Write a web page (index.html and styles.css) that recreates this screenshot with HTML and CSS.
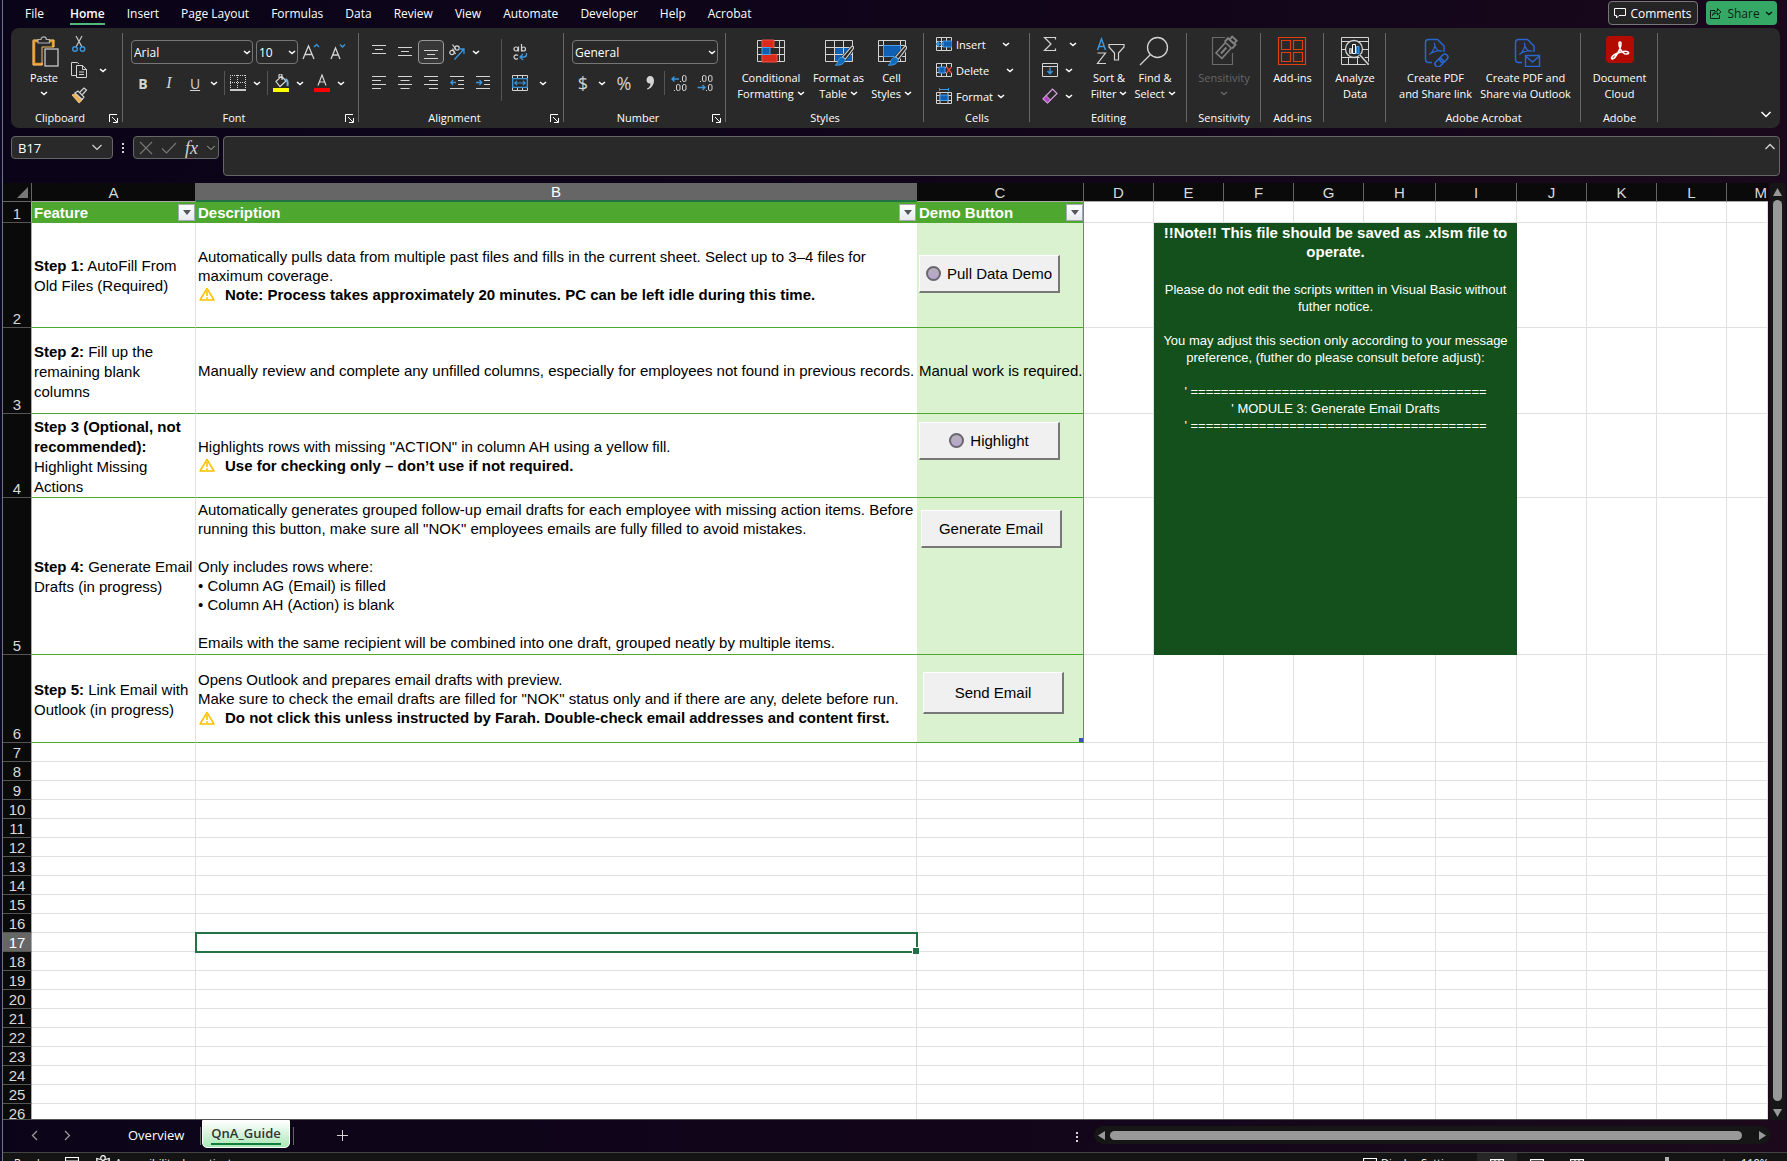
FILE: index.html
```html
<!DOCTYPE html>
<html lang="en">
<head>
<meta charset="utf-8">
<title>QnA_Guide</title>
<link rel="stylesheet" href="styles.css">
</head>
<body>
<svg width="0" height="0" class="defs" aria-hidden="true">
  <symbol id="chev" viewBox="0 0 8 5"><path d="M1 1l3 2.6L7 1" fill="none" stroke="currentColor" stroke-width="1.5"/></symbol>
  <symbol id="launch" viewBox="0 0 9 9"><path d="M.5 8V.5H8M3 3l5 5M8.500 4v4.500H4" fill="none" stroke="currentColor"/></symbol>
  <symbol id="warn" viewBox="0 0 16 14"><path d="M8 1.500L15 13H1z" fill="none" stroke="#ffc000" stroke-width="1.500" stroke-linejoin="round"/><path d="M8 4v5M8 10.300v1.700" stroke="#ffc000" stroke-width="1.600"/></symbol>
  <symbol id="brush" viewBox="0 0 24 24"><path d="M22 2L11 14M22 2l1 1L13 16" fill="none" stroke="#292929" stroke-width="4"/><path d="M22.500 1.500c1 1 .5 2-.5 3.500l-8 10.500-3-2.500 9-10.500c1-1 2-1.500 2.500-1z" fill="#292929" stroke="#d4d4d4" stroke-width="1.200"/><path d="M10.500 13.500c3 .5 4 3 2.500 5-1.500 2.500-5 4-10 3.500 2-1 2.500-3 3-5 .5-2 2-3.500 4.500-3.500z" fill="#0f6cbd" stroke="#4ba0e8"/></symbol>
  <symbol id="pdf" viewBox="0 0 32 32"><path d="M12 27.500H8.500a3 3 0 0 1-3-3v-17a3 3 0 0 1 3-3h9l6.500 6.500v6" fill="none" stroke="#2a66d0" stroke-width="1.500"/><path d="M9.500 19.500c1-2 9-4.500 12-3.500-3 1-7-3-7-7.500 1.500 2-1.500 8.500-5 11z" fill="none" stroke="#2a66d0" stroke-width="1.200"/></symbol>
</svg>

<div class="app">
  <header class="tabs">
    <nav class="menu">
      <a href="#file" class="first">File</a><a href="#home" class="on">Home</a><a href="#insert">Insert</a><a href="#layout">Page Layout</a><a href="#formulas">Formulas</a><a href="#data">Data</a><a href="#review">Review</a><a href="#view">View</a><a href="#automate">Automate</a><a href="#developer">Developer</a><a href="#help">Help</a><a href="#acrobat">Acrobat</a>
    </nav>
    <button class="comments"><svg width="12" height="12" viewBox="0 0 12 12"><path d="M.5 1.500h11v7H5l-2.500 2.500V8.500h-2z" fill="none" stroke="#fff"/></svg>Comments</button>
    <button class="share"><svg width="12" height="12" viewBox="0 0 12 12"><path d="M5 3.500H.5v8h9V8M2.500 8.500c.5-3 2.500-4.500 5-4.500V1.500L11 5 7.500 8V6C5.500 6 4 6.500 2.500 8.500z" fill="none" stroke="#0c1f14"/></svg>Share<svg width="8" height="5"><use href="#chev"/></svg></button>
  </header>

  <section class="ribbon">
    <div class="group g-clip">
      <div class="body">
        <button class="tall paste">
          <svg width="32" height="32" viewBox="0 0 32 32"><path d="M6 6h19v6M15 29H6V6" fill="none" stroke="#e8962e" stroke-width="2.500"/><path d="M5 5h21v7H14v18H5z" fill="none" stroke="#f5c06a" stroke-width="1"/><path d="M10 8V4.500h3a2.700 2.700 0 0 1 5.400 0h3V8z" fill="#292929" stroke="#b0b0b0" stroke-width="1.200"/><rect x="17" y="14" width="13" height="17" fill="#292929" stroke="#d4d4d4" stroke-width="1.200"/></svg>
          <span>Paste</span><svg width="8" height="5" class="under"><use href="#chev"/></svg>
        </button>
        <div class="stack clipstack">
          <div class="row"><button class="t" aria-label="Cut"><svg width="16" height="18" viewBox="0 0 16 18"><path d="M5 1l6 11M11 1L5 12" stroke="#c8c8c8" stroke-width="1.200" fill="none"/><circle cx="4" cy="14" r="2.300" fill="none" stroke="#3a96dd" stroke-width="1.400"/><circle cx="11.500" cy="14" r="2.300" fill="none" stroke="#3a96dd" stroke-width="1.400"/></svg></button></div>
          <div class="row"><button class="t" aria-label="Copy"><svg width="18" height="18" viewBox="0 0 18 18"><path d="M6 14.500H1.500v-13h6L9 3" fill="none" stroke="#d4d4d4"/><path d="M6.500 4.500h6l4 4v8h-10zM12.500 4.500v4h4M9 11h5M9 13.500h5" fill="none" stroke="#d4d4d4"/></svg></button><button class="c cc" aria-label="Copy options"><svg width="8" height="5"><use href="#chev"/></svg></button></div>
          <div class="row"><button class="t" aria-label="Format Painter"><svg width="18" height="18" viewBox="0 0 18 18"><path d="M2 8l7 8c2-1 3-3 3.500-5L7 6z" fill="#f0b050" stroke="#ffd890" stroke-width=".8"/><path d="M5 6l3-2 6 6-2 2.500zM10 5l4-4 2.500 2-4 4.500" fill="#292929" stroke="#d4d4d4" stroke-width="1.200"/></svg></button></div>
        </div>
      </div>
      <div class="foot"><span>Clipboard</span><button aria-label="Clipboard settings"><svg width="9" height="9"><use href="#launch"/></svg></button></div>
    </div>

    <div class="group g-font">
      <div class="body lines">
        <div class="row r1">
          <label class="combo w122"><select aria-label="Font"><option>Arial</option></select><svg width="8" height="5"><use href="#chev"/></svg></label>
          <label class="combo w42"><select aria-label="Font size"><option>10</option></select><svg width="8" height="5"><use href="#chev"/></svg></label>
          <button class="t" aria-label="Increase font size"><svg width="18" height="18" viewBox="0 0 18 18"><path d="M1 16L6.500 3 12 16M3 11.500h7" fill="none" stroke="#d4d4d4" stroke-width="1.300"/><path d="M12 4l2.500-2.500L17 4" fill="none" stroke="#3a96dd" stroke-width="1.400"/></svg></button>
          <button class="t" aria-label="Decrease font size"><svg width="18" height="18" viewBox="0 0 18 18"><path d="M3 16L7.500 5 12 16M4.700 12h5.600" fill="none" stroke="#d4d4d4" stroke-width="1.300"/><path d="M12 1.500L14.500 4 17 1.500" fill="none" stroke="#3a96dd" stroke-width="1.400"/></svg></button>
        </div>
        <div class="row">
          <button class="t b">B</button><button class="t i">I</button><button class="t u">U</button><button class="c" aria-label="Underline options"><svg width="8" height="5"><use href="#chev"/></svg></button>
          <i class="sep"></i>
          <button class="t" aria-label="Borders"><svg width="16" height="16" viewBox="0 0 16 16"><path d="M.5 0v14M15.500 0v14M0 .5h16M0 7.500h16M7.500 0v14" stroke="#d4d4d4" stroke-dasharray="1 1"/><path d="M0 15h16" stroke="#fff" stroke-width="1.500"/></svg></button><button class="c" aria-label="Border options"><svg width="8" height="5"><use href="#chev"/></svg></button>
          <i class="sep"></i>
          <button class="t" aria-label="Fill color"><svg width="18" height="18" viewBox="0 0 18 18"><path d="M4 7.500L9.500 2l4.500 5-6 5.500zM7 5V1.500a1.500 1.500 0 0 1 3 0V6" fill="none" stroke="#d4d4d4" stroke-width="1.200"/><path d="M13.500 5c2 1 2.500 3.500 2 7" fill="none" stroke="#6fb5ea" stroke-width="2"/><path d="M1 14h16v4H1z" fill="#ff0"/></svg></button><button class="c" aria-label="Fill options"><svg width="8" height="5"><use href="#chev"/></svg></button>
          <button class="t gap3" aria-label="Font color"><svg width="18" height="18" viewBox="0 0 18 18"><path d="M5 11.500L9 1l4 10.500M6.500 8h5" fill="none" stroke="#d4d4d4" stroke-width="1.200"/><path d="M1 14h16v4H1z" fill="red"/></svg></button><button class="c" aria-label="Font color options"><svg width="8" height="5"><use href="#chev"/></svg></button>
        </div>
      </div>
      <div class="foot"><span>Font</span><button aria-label="Font settings"><svg width="9" height="9"><use href="#launch"/></svg></button></div>
    </div>

    <div class="group g-align">
      <div class="body">
        <div class="lines">
          <div class="row">
            <button class="t" aria-label="Top align"><svg width="14" height="14" viewBox="0 0 14 14"><path d="M0 .5h14M3 4.500h8M0 8.500h14" stroke="#d4d4d4"/></svg></button>
            <button class="t" aria-label="Middle align"><svg width="14" height="14" viewBox="0 0 14 14"><path d="M0 2.500h14M3 6.500h8M0 10.500h14" stroke="#d4d4d4"/></svg></button>
            <button class="t on" aria-label="Bottom align"><svg width="14" height="14" viewBox="0 0 14 14"><path d="M0 5.500h14M3 9.500h8M0 13.500h14" stroke="#d4d4d4"/></svg></button>
            <button class="t" aria-label="Orientation"><svg width="18" height="18" viewBox="0 0 18 18"><g fill="none" stroke="#d4d4d4" stroke-width="1.200"><circle cx="4" cy="9.500" r="2.200"/><path d="M4.500 5.500l3 5.500"/><circle cx="9" cy="5" r="2.200"/><path d="M4.500 1.500l3.500 5"/></g><path d="M6.500 16.500L16 6M11 6h5v5" fill="none" stroke="#3a96dd" stroke-width="1.300"/></svg></button><button class="c" aria-label="Orientation options"><svg width="8" height="5"><use href="#chev"/></svg></button>
          </div>
          <div class="row">
            <button class="t" aria-label="Align left"><svg width="14" height="14" viewBox="0 0 14 14"><path d="M0 .5h14M0 4.500h9M0 8.500h14M0 12.500h9" stroke="#d4d4d4"/></svg></button>
            <button class="t" aria-label="Center"><svg width="14" height="14" viewBox="0 0 14 14"><path d="M0 .5h14M2.500 4.500h9M0 8.500h14M2.500 12.500h9" stroke="#d4d4d4"/></svg></button>
            <button class="t" aria-label="Align right"><svg width="14" height="14" viewBox="0 0 14 14"><path d="M0 .5h14M5 4.500h9M0 8.500h14M5 12.500h9" stroke="#d4d4d4"/></svg></button>
            <button class="t" aria-label="Decrease indent"><svg width="14" height="14" viewBox="0 0 14 14"><path d="M0 .5h14M8 4.500h6M8 8.500h6M0 12.500h14" stroke="#d4d4d4"/><path d="M6 6.500H.8M3 4L.8 6.500 3 9" fill="none" stroke="#3a96dd" stroke-width="1.300"/></svg></button>
            <button class="t" aria-label="Increase indent"><svg width="14" height="14" viewBox="0 0 14 14"><path d="M0 .5h14M8 4.500h6M8 8.500h6M0 12.500h14" stroke="#d4d4d4"/><path d="M0 6.500h5.500M3.500 4l2.200 2.500L3.500 9" fill="none" stroke="#3a96dd" stroke-width="1.300"/></svg></button>
          </div>
        </div>
        <i class="sep tallsep"></i>
        <div class="lines wrapcol">
          <div class="row"><button class="t" aria-label="Wrap text"><svg width="16" height="18" viewBox="0 0 16 18"><g fill="none" stroke="#d4d4d4" stroke-width="1.200"><circle cx="4" cy="6" r="2"/><path d="M6.500 3.500V8.500M9.500 1v7.500M6 12.500c-2-1.500-4 0-4 1.500s2 3 4 1.500"/><circle cx="11.500" cy="6" r="2"/></g><path d="M14.500 10v1.500c0 2-1 2.500-3 2.500H8.500M11 11l-3 3 3 3" fill="none" stroke="#3a96dd" stroke-width="1.400"/></svg></button></div>
          <div class="row"><button class="t" aria-label="Merge and center"><svg width="16" height="16" viewBox="0 0 16 16"><path d="M.5.500h15v15H.5zM5.500.5v3M10.500.5v3M5.500 12.500v3M10.500 12.500v3" fill="none" stroke="#d4d4d4"/><path d="M.7 3.700h14.600v8.600H.7z" fill="#292929" stroke="#3a96dd" stroke-width="1.300"/><path d="M3 8h10M5 5.800L2.800 8 5 10.200M11 5.800L13.200 8 11 10.200" fill="none" stroke="#3a96dd" stroke-width="1.200"/></svg></button><button class="c cm" aria-label="Merge options"><svg width="8" height="5"><use href="#chev"/></svg></button></div>
        </div>
      </div>
      <div class="foot"><span>Alignment</span><button aria-label="Alignment settings"><svg width="9" height="9"><use href="#launch"/></svg></button></div>
    </div>

    <div class="group g-num">
      <div class="body lines">
        <div class="row r1"><label class="combo w146"><select aria-label="Number format"><option>General</option></select><svg width="8" height="5"><use href="#chev"/></svg></label></div>
        <div class="row">
          <button class="t sym">$</button><button class="c" aria-label="Currency options"><svg width="8" height="5"><use href="#chev"/></svg></button><button class="t sym gap3">%</button><button class="t" aria-label="Comma style"><svg width="10" height="14" viewBox="0 0 10 14"><path d="M5 0c2.500 0 4 1.800 4 4.500C9 9 6 12.500 2.500 13.500l-.5-1C4 11.500 5.500 10 5.500 7.500 3 8 1.500 6 1.500 4S3 0 5 0z" fill="#d4d4d4"/></svg></button>
          <i class="sep nomargin"></i>
          <button class="t dec" aria-label="Increase decimal"><svg width="18" height="18" viewBox="0 0 18 18"><path d="M9 5H2M4.500 2.500L2 5l2.500 2.500" fill="none" stroke="#3a96dd" stroke-width="1.400"/><g fill="none" stroke="#d4d4d4"><rect x="12.500" y="1.500" width="3.500" height="6" rx="1.500"/><rect x="6.500" y="10.500" width="3.500" height="6" rx="1.500"/><rect x="12.500" y="10.500" width="3.500" height="6" rx="1.500"/><path d="M10 7.500h1M4 16.500h1"/></g></svg></button>
          <button class="t dec" aria-label="Decrease decimal"><svg width="18" height="18" viewBox="0 0 18 18"><path d="M1.500 13.500H9M6.500 11L9 13.500 6.500 16" fill="none" stroke="#3a96dd" stroke-width="1.400"/><g fill="none" stroke="#d4d4d4"><rect x="6.500" y="1.500" width="3.500" height="6" rx="1.500"/><rect x="12.500" y="1.500" width="3.500" height="6" rx="1.500"/><rect x="12.500" y="10.500" width="3.500" height="6" rx="1.500"/><path d="M4 7.500h1M10 16.500h1"/></g></svg></button>
        </div>
      </div>
      <div class="foot"><span>Number</span><button aria-label="Number settings"><svg width="9" height="9"><use href="#launch"/></svg></button></div>
    </div>

    <div class="group g-styles">
      <div class="body center">
        <button class="tall w75"><svg width="32" height="32" viewBox="0 0 32 32"><path d="M2.500 5.500h27v21h-27zM2.500 12.500h27M2.500 19.500h27M7.500 5.500v21M24.500 5.500v21" fill="none" stroke="#d4d4d4"/><path d="M7 5h12v7.500H7zM7 19.500h15V27H7z" fill="#d92b1c" stroke="#ef5546"/><path d="M7 12.500h8v7H7z" fill="#0f5fb5" stroke="#4ba0e8"/></svg><span>Conditional<br>Formatting <svg width="8" height="5"><use href="#chev"/></svg></span></button>
        <button class="tall w58"><svg width="32" height="32" viewBox="0 0 32 32"><path d="M12 12h17v15H12z" fill="#0f5fb5"/><path d="M2.500 5.500h27v21h-27zM2.500 12.500h27M2.500 19.500h27M11.500 5.500v21M20.500 5.500v21" fill="none" stroke="#d4d4d4"/><use href="#brush" x="9" y="10" width="23" height="22"/></svg><span>Format as<br>Table <svg width="8" height="5"><use href="#chev"/></svg></span></button>
        <button class="tall w46"><svg width="32" height="32" viewBox="0 0 32 32"><path d="M2.500 5.500h27v21h-27zM2.500 10.500h27M7.500 5.500v21M24.500 5.500v21M2.500 21.500h27" fill="none" stroke="#d4d4d4"/><path d="M7.500 10.500h17v11h-17z" fill="#0f5fb5" stroke="#4ba0e8"/><use href="#brush" x="9" y="10" width="23" height="22"/></svg><span>Cell<br>Styles <svg width="8" height="5"><use href="#chev"/></svg></span></button>
      </div>
      <div class="foot"><span>Styles</span></div>
    </div>

    <div class="group g-cells">
      <div class="body stack">
        <button class="side w85"><svg width="16" height="16" viewBox="0 0 16 16"><path d="M.5 1.500h15v13H.5zM5.500 1.500v13M10.500 1.500v13M.5 5.500h15M.5 10.500h15" fill="none" stroke="#d4d4d4"/><path d="M7 5h9v6H7z" fill="#0f5fb5" stroke="#4ba0e8"/><path d="M0 8h8M3.500 5L.8 8l2.700 3" fill="none" stroke="#3a96dd" stroke-width="1.500"/></svg><span>Insert</span><svg width="8" height="5"><use href="#chev"/></svg></button>
        <button class="side w89"><svg width="16" height="16" viewBox="0 0 16 16"><path d="M.5 1.500h15v13H.5zM5.500 1.500v13M10.500 1.500v13M.5 5.500h15M.5 10.500h15" fill="none" stroke="#d4d4d4"/><path d="M3 5h6v6H3z" fill="#0f5fb5" stroke="#4ba0e8"/><path d="M10 5h6v6h-6z" fill="#292929"/><path d="M10.500 5l5 6M15.500 5l-5 6" stroke="#e8473c" stroke-width="1.400"/></svg><span>Delete</span><svg width="8" height="5"><use href="#chev"/></svg></button>
        <button class="side w80"><svg width="16" height="16" viewBox="0 0 16 16"><path d="M.5 4.500h15v11H.5zM4 4.500v11M12 4.500v11M.5 7.500h15M.5 12.500h15" fill="none" stroke="#d4d4d4"/><path d="M4 7h8v5.500H4z" fill="#0f5fb5" stroke="#4ba0e8"/><path d="M4 1.500h8M3.500 0v3M12.500 0v3" stroke="#3a96dd"/></svg><span>Format</span><svg width="8" height="5"><use href="#chev"/></svg></button>
      </div>
      <div class="foot"><span>Cells</span></div>
    </div>

    <div class="group g-edit">
      <div class="body">
        <div class="stack editcol">
          <div class="row"><button class="t" aria-label="AutoSum"><svg width="14" height="16" viewBox="0 0 14 16"><path d="M12.500 3.500V1.500H1.500L8 8l-6.500 6.500h11v-2" fill="none" stroke="#d4d4d4" stroke-width="1.200"/></svg></button><button class="c wide" aria-label="Sum options"><svg width="8" height="5"><use href="#chev"/></svg></button></div>
          <div class="row"><button class="t" aria-label="Fill"><svg width="16" height="14" viewBox="0 0 16 14"><path d="M.5.500h15v13H.5zM.5 3.500h15" fill="none" stroke="#d4d4d4"/><path d="M8 4.500v6M5.500 8L8 10.800 10.500 8" fill="none" stroke="#3a96dd" stroke-width="1.400"/></svg></button><button class="c" aria-label="Fill options"><svg width="8" height="5"><use href="#chev"/></svg></button></div>
          <div class="row"><button class="t" aria-label="Clear"><svg width="16" height="16" viewBox="0 0 16 16"><path d="M1 11L10.500 1 15 5.500 5.500 15z" fill="none" stroke="#d8a0e0" stroke-width="1.200"/><path d="M1 11l3-3.500L8.500 12l-3 3z" fill="#b146c2" stroke="#d8a0e0"/></svg></button><button class="c" aria-label="Clear options"><svg width="8" height="5"><use href="#chev"/></svg></button></div>
        </div>
        <button class="tall w46"><svg width="32" height="32" viewBox="0 0 32 32"><path d="M4.500 15L8.500 4l4 11M6 11.500h5" fill="none" stroke="#3a96dd" stroke-width="1.500"/><path d="M4.500 18h8l-8 10.500h8.500" fill="none" stroke="#d4d4d4" stroke-width="1.200"/><path d="M16 9.500h15v2.500l-5.500 6v7h-4v-7L16 12z" fill="none" stroke="#d4d4d4" stroke-width="1.200"/></svg><span>Sort &amp;<br>Filter <svg width="8" height="5"><use href="#chev"/></svg></span></button>
        <button class="tall w46"><svg width="32" height="32" viewBox="0 0 32 32"><circle cx="18.500" cy="12.500" r="10" fill="none" stroke="#d4d4d4" stroke-width="1.300"/><path d="M11.500 19.500L1 30" stroke="#d4d4d4" stroke-width="1.300"/></svg><span>Find &amp;<br>Select <svg width="8" height="5"><use href="#chev"/></svg></span></button>
      </div>
      <div class="foot"><span>Editing</span></div>
    </div>

    <div class="group g-sens">
      <div class="body center">
        <button class="tall off" disabled><svg width="32" height="32" viewBox="0 0 32 32"><path d="M17 2.500H4.500v27h20V18" fill="none" stroke="#6b6b6b" stroke-width="1.200"/><g transform="rotate(-48 17 14)"><rect x="8" y="10" width="14" height="8" fill="#292929" stroke="#808080" stroke-width="1.500"/><path d="M11 14h8" stroke="#808080" stroke-width="2"/><path d="M22 9h5v10h-5M27 11h4v6h-4" fill="none" stroke="#808080" stroke-width="2"/></g></svg><span>Sensitivity</span><svg width="8" height="5" class="under"><use href="#chev"/></svg></button>
      </div>
      <div class="foot"><span>Sensitivity</span></div>
    </div>

    <div class="group g-add">
      <div class="body center">
        <button class="tall"><svg width="32" height="32" viewBox="0 0 32 32"><path d="M2.500 2.500h27v27h-27zM5.500 5.500h9v9h-9zM17.500 5.500h9v9h-9zM5.500 17.500h9v9h-9zM17.500 17.500h9v9h-9z" fill="none" stroke="#e03e0c" stroke-width="1.200"/></svg><span>Add-ins</span></button>
      </div>
      <div class="foot"><span>Add-ins</span></div>
    </div>

    <div class="group g-analyze">
      <div class="body center">
        <button class="tall"><svg width="32" height="32" viewBox="0 0 32 32"><path d="M2.500 2.500h27v27h-27zM2.500 6.500h27M2.500 14.500h27M2.500 22.500h27M9.500 22v7M18.500 22v7" fill="none" stroke="#d4d4d4"/><circle cx="15" cy="14" r="8.500" fill="#292929" stroke="#d4d4d4" stroke-width="1.300"/><path d="M21 20l8 9" stroke="#292929" stroke-width="4"/><path d="M21 20l8.500 9.500" stroke="#d4d4d4" stroke-width="1.500"/><path d="M10.500 13.500h2v5h-2z" fill="#888" stroke="#bbb"/><path d="M13.500 9.500h3v9h-3z" fill="#292929" stroke="#fff"/><path d="M17.500 11.500h2.500v7h-2.500z" fill="#0f6cbd" stroke="#4ba0e8"/></svg><span>Analyze<br>Data</span></button>
      </div>
      <div class="foot"></div>
    </div>

    <div class="group g-acro">
      <div class="body center">
        <button class="tall w85"><svg width="32" height="32"><use href="#pdf"/><g transform="rotate(-45 22 25)" fill="none" stroke="#2a66d0" stroke-width="1.600"><rect x="13.500" y="22" width="9" height="6" rx="3"/><rect x="20" y="22" width="9" height="6" rx="3"/></g></svg><span>Create PDF<br>and Share link</span></button>
        <button class="tall w96"><svg width="32" height="32"><use href="#pdf"/><path d="M15.500 20.500h14v11h-14zM15.500 21l7 6 7-6" fill="#292929" stroke="#2a66d0" stroke-width="1.400"/></svg><span>Create PDF and<br>Share via Outlook</span></button>
      </div>
      <div class="foot"><span>Adobe Acrobat</span></div>
    </div>

    <div class="group g-adobe">
      <div class="body center">
        <button class="tall"><svg width="32" height="32" viewBox="0 0 32 32"><rect x="2" y="1" width="28" height="27" rx="4" fill="#b30b00"/><path d="M7.500 23c1-3 6-5 9.500-6s6.500-1 7.500.500-3 2.300-5 .500c-3-2.500-4.500-6-4.500-9.500 0-2 2-2 2 0 0 3.500-2.500 8.500-4.500 11.500-2 3.500-4.500 5-5 3z" fill="none" stroke="#fff" stroke-width="1.600"/></svg><span>Document<br>Cloud</span></button>
      </div>
      <div class="foot"><span>Adobe</span></div>
    </div>
    <button class="collapse" aria-label="Collapse ribbon"><svg width="12" height="7" viewBox="0 0 12 7"><path d="M1.500 1L6 5.500 10.500 1" fill="none" stroke="#fff" stroke-width="1.500"/></svg></button>
  </section>

  <section class="fbar">
    <label class="namebox"><input value="B17" aria-label="Name box"><svg width="12" height="7" viewBox="0 0 12 7"><path d="M1.500 1L6 5.500 10.500 1" fill="none" stroke="#d4d4d4" stroke-width="1.200"/></svg></label>
    <svg class="dots" width="3" height="12"><path d="M0 1h2v2H0zM0 5h2v2H0zM0 9h2v2H0z" fill="#d4d4d4"/></svg>
    <div class="fx">
      <button aria-label="Cancel"><svg width="14" height="14" viewBox="0 0 14 14"><path d="M1 1l12 12M13 1L1 13" stroke="#777" stroke-width="1.100"/></svg></button>
      <button aria-label="Enter"><svg width="16" height="12" viewBox="0 0 16 12"><path d="M1 6.500l4.500 4.500L15 1" fill="none" stroke="#777" stroke-width="1.200"/></svg></button>
      <button class="fn">fx</button>
      <svg width="10" height="6" viewBox="0 0 12 7"><path d="M1.500 1L6 5.500 10.500 1" fill="none" stroke="#b0b0b0" stroke-width="1.200"/></svg>
    </div>
    <label class="formula"><input aria-label="Formula"><svg width="12" height="7" viewBox="0 0 12 7"><path d="M1.500 6L6 1.500 10.500 6" fill="none" stroke="#d4d4d4" stroke-width="1.300"/></svg></label>
  </section>

  <main class="sheet">
    <div class="grid">
      <table>
        <colgroup><col class="k0"><col class="ka"><col class="kb"><col class="kc"><col class="k"><col class="k"><col class="k"><col class="k"><col class="kh"><col class="ki"><col class="k"><col class="k"><col class="k"><col></colgroup>
        <thead><tr><th class="corner"><svg width="11" height="11"><path d="M11 0v11H0z" fill="#777"/></svg></th><th>A</th><th class="sel">B</th><th>C</th><th>D</th><th>E</th><th>F</th><th>G</th><th>H</th><th>I</th><th>J</th><th>K</th><th>L</th><th class="m">M</th></tr></thead>
        <tbody>
          <tr class="r1h"><th>1</th>
            <td class="gh"><div>Feature<button aria-label="Filter Feature"><svg width="8" height="5"><path d="M0 0h8L4 5z" fill="#555"/></svg></button></div></td>
            <td class="gh"><div>Description<button aria-label="Filter Description"><svg width="8" height="5"><path d="M0 0h8L4 5z" fill="#555"/></svg></button></div></td>
            <td class="gh"><div>Demo Button<button aria-label="Filter Demo Button"><svg width="8" height="5"><path d="M0 0h8L4 5z" fill="#555"/></svg></button></div></td>
            <td></td><td></td><td></td><td></td><td></td><td></td><td></td><td></td><td></td><td></td></tr>
          <tr class="h105 data"><th>2</th>
            <td class="a"><b>Step 1:</b> AutoFill From<br>Old Files (Required)</td>
            <td class="d">Automatically pulls data from multiple past files and fills in the current sheet. Select up to 3–4 files for<br>maximum coverage.<p><svg width="16" height="14"><use href="#warn"/></svg>Note: Process takes approximately 20 minutes. PC can be left idle during this time.</p></td>
            <td class="demo p32"><button><i class="dot"></i>Pull Data Demo</button></td>
            <td></td>
            <td class="note" colspan="5" rowspan="4"><h2>!!Note!! This file should be saved as .xlsm file to operate.</h2><p>Please do not edit the scripts written in Visual Basic without futher notice.</p><p>You may adjust this section only according to your message preference, (futher do please consult before adjust):</p><p>' =======================================<br>' MODULE 3: Generate Email Drafts<br>' =======================================</p></td>
            <td></td><td></td><td></td><td></td></tr>
          <tr class="h86 data"><th>3</th>
            <td class="a"><b>Step 2:</b> Fill up the<br>remaining blank<br>columns</td>
            <td class="d">Manually review and complete any unfilled columns, especially for employees not found in previous records.</td>
            <td class="demo mid">Manual work is required.</td>
            <td></td><td></td><td></td><td></td><td></td></tr>
          <tr class="h84 data"><th>4</th>
            <td class="a"><b>Step 3 (Optional, not<br>recommended):</b><br>Highlight Missing<br>Actions</td>
            <td class="d">Highlights rows with missing "ACTION" in column AH using a yellow fill.<p><svg width="16" height="14"><use href="#warn"/></svg>Use for checking only – don’t use if not required.</p></td>
            <td class="demo p8"><button><i class="dot"></i>Highlight</button></td>
            <td></td><td></td><td></td><td></td><td></td></tr>
          <tr class="h157 data"><th>5</th>
            <td class="a"><b>Step 4:</b> Generate Email<br>Drafts (in progress)</td>
            <td class="d">Automatically generates grouped follow-up email drafts for each employee with missing action items. Before<br>running this button, make sure all "NOK" employees emails are fully filled to avoid mistakes.<br><br>Only includes rows where:<br>• Column AG (Email) is filled<br>• Column AH (Action) is blank<br><br>Emails with the same recipient will be combined into one draft, grouped neatly by multiple items.</td>
            <td class="demo p12"><button>Generate Email</button></td>
            <td></td><td></td><td></td><td></td><td></td></tr>
          <tr class="h88 data"><th>6</th>
            <td class="a"><b>Step 5:</b> Link Email with<br>Outlook (in progress)</td>
            <td class="d">Opens Outlook and prepares email drafts with preview.<br>Make sure to check the email drafts are filled for "NOK" status only and if there are any, delete before run.<p><svg width="16" height="14"><use href="#warn"/></svg>Do not click this unless instructed by Farah. Double-check email addresses and content first.</p></td>
            <td class="demo p17 last"><button class="big">Send Email</button></td>
            <td></td><td></td><td></td><td></td><td></td><td></td><td></td><td></td><td></td><td></td></tr>
          <tr><th>7<td><td><td><td><td><td><td><td><td><td><td><td><td></tr>
          <tr><th>8<td><td><td><td><td><td><td><td><td><td><td><td><td></tr>
          <tr><th>9<td><td><td><td><td><td><td><td><td><td><td><td><td></tr>
          <tr><th>10<td><td><td><td><td><td><td><td><td><td><td><td><td></tr>
          <tr><th>11<td><td><td><td><td><td><td><td><td><td><td><td><td></tr>
          <tr><th>12<td><td><td><td><td><td><td><td><td><td><td><td><td></tr>
          <tr><th>13<td><td><td><td><td><td><td><td><td><td><td><td><td></tr>
          <tr><th>14<td><td><td><td><td><td><td><td><td><td><td><td><td></tr>
          <tr><th>15<td><td><td><td><td><td><td><td><td><td><td><td><td></tr>
          <tr><th>16<td><td><td><td><td><td><td><td><td><td><td><td><td></tr>
          <tr><th class="sel">17<td><td class="active"><td><td><td><td><td><td><td><td><td><td><td></tr>
          <tr><th>18<td><td><td><td><td><td><td><td><td><td><td><td><td></tr>
          <tr><th>19<td><td><td><td><td><td><td><td><td><td><td><td><td></tr>
          <tr><th>20<td><td><td><td><td><td><td><td><td><td><td><td><td></tr>
          <tr><th>21<td><td><td><td><td><td><td><td><td><td><td><td><td></tr>
          <tr><th>22<td><td><td><td><td><td><td><td><td><td><td><td><td></tr>
          <tr><th>23<td><td><td><td><td><td><td><td><td><td><td><td><td></tr>
          <tr><th>24<td><td><td><td><td><td><td><td><td><td><td><td><td></tr>
          <tr><th>25<td><td><td><td><td><td><td><td><td><td><td><td><td></tr>
          <tr><th>26<td><td><td><td><td><td><td><td><td><td><td><td><td></tr>
        </tbody>
      </table>
    </div>
    <div class="vscroll"><svg width="9" height="8"><path d="M4.500 0L9 8H0z" fill="#999"/></svg><i></i><svg width="9" height="8"><path d="M4.500 8L9 0H0z" fill="#999"/></svg></div>
  </main>

  <footer class="sheets">
    <button class="arrow" aria-label="Previous sheet"><svg width="7" height="11" viewBox="0 0 7 11"><path d="M6 1L1.500 5.500 6 10" fill="none" stroke="#999" stroke-width="1.300"/></svg></button>
    <button class="arrow" aria-label="Next sheet"><svg width="7" height="11" viewBox="0 0 7 11"><path d="M1 1l4.500 4.500L1 10" fill="none" stroke="#999" stroke-width="1.300"/></svg></button>
    <a href="#overview" class="stab">Overview</a><a href="#guide" class="stab cur"><span>QnA_Guide</span></a>
    <button class="add" aria-label="New sheet"><svg width="11" height="11"><path d="M5.500 0v11M0 5.500h11" stroke="#d4d4d4"/></svg></button>
    <svg class="grip" width="2" height="10"><path d="M0 0h2v2H0zM0 4h2v2H0zM0 8h2v2H0z" fill="#d4d4d4"/></svg>
    <div class="hscroll"><svg width="7" height="9"><path d="M7 0v9L0 4.500z" fill="#999"/></svg><i></i><svg width="7" height="9"><path d="M0 0v9l7-4.500z" fill="#999"/></svg></div>
  </footer>

  <div class="status">
    <span class="ready">Ready</span>
    <svg width="14" height="14"><path d="M.5.500h13v13H.5zM.5 4h13" fill="none" stroke="#fff" stroke-width="1.200"/></svg>
    <svg class="acc" width="14" height="16"><path d="M.8 6V3.500l3.700 1M13.200 6V3.500l-3.700 1M4.500 6v9M9.500 6v9M.8 6l3.700 1M13.200 6l-3.700 1" fill="none" stroke="#fff" stroke-width="1.200"/><circle cx="7" cy="3" r="2.300" fill="none" stroke="#fff" stroke-width="1.200"/></svg>
    <span class="grow">Accessibility: Investigate</span>
    <svg width="14" height="14"><path d="M.5 1.500h13v9H.5zM4 13h6" fill="none" stroke="#fff" stroke-width="1.200"/></svg>
    <span class="disp">Display Settings</span>
    <button class="vb on" aria-label="Normal view"><svg width="14" height="14"><path d="M.6.600h12.800v12.800H.6zM.6 5h12.800M5 .6v12.800M9 .6v12.800" fill="none" stroke="#fff" stroke-width="1.200"/></svg></button>
    <button class="vb" aria-label="Page layout view"><svg width="14" height="14"><path d="M.6.600h12.800v12.800H.6zM3.500 3.500h7v10M3.500 3.500v10M6 6h3" fill="none" stroke="#fff" stroke-width="1.200"/></svg></button>
    <button class="vb" aria-label="Page break view"><svg width="14" height="14"><path d="M.6.600h12.800v12.800H.6zM5 .6v8M9 .6v8" fill="none" stroke="#fff" stroke-width="1.200"/></svg></button>
    <svg class="zoom" width="101" height="14"><path d="M0 7h101M87 2v10" stroke="#888"/><path d="M28 0h4v14h-4z" fill="#b0b0b0"/></svg>
    <span class="pct">110%</span>
  </div>
</div>
</body>
</html>
```
FILE: styles.css
```css
* { box-sizing: border-box; }
body { margin: 0; overflow: hidden; background: #0a0824; font-family: "Open Sans", "Noto Sans", sans-serif; font-size: 12px; color: #fff; }
.defs { position: absolute; }
button { border: 0; padding: 0; margin: 0; background: none; color: inherit; font: inherit; }
svg { display: block; flex: none; }
.app { height: calc(100vh + 14px); margin-left: 2px; border-left: 1px solid #74747c; display: flex; flex-direction: column; background: linear-gradient(100deg, #0a0418, #12051a 60%, #1c0a1c); }

/* tab strip */
.tabs { flex: none; height: 28px; display: flex; align-items: flex-start; padding: 1px 10px 0 22px; }
.menu { flex: 1; display: flex; gap: 22px; }
.menu a { color: #fff; text-decoration: none; font-size: 12px; line-height: 20px; padding: 3px 0 0; height: 24px; }
.menu .first { margin-right: 4px; }
.menu .on { font-weight: 600; border-bottom: 2px solid #4fb87c; }
.comments, .share { height: 24px; border-radius: 4px; display: flex; align-items: center; justify-content: center; }
.comments { width: 90px; gap: 4px; border: 1px solid #777; background: #242424; }
.share { width: 71px; margin-left: 8px; gap: 5px; background: #36a865; color: #0c1f14; }

/* ribbon */
.ribbon { flex: none; display: flex; height: 100px; margin: 0 7px 0 8px; background: #292929; border-radius: 8px; }
.group { display: flex; flex-direction: column; background: linear-gradient(#666, #666) right 5px / 1px 89px no-repeat; font-size: 12px; }
.body { height: 82px; display: flex; }
.foot { height: 16px; display: flex; align-items: center; font-size: 11px; line-height: 16px; text-align: center; }
.foot span { flex: 1; white-space: nowrap; }
.foot button { width: 14px; }
.g-clip { width: 112px; } .g-font { width: 236px; } .g-align { width: 205px; } .g-num { width: 162px; }
.g-styles { width: 198px; } .g-cells { width: 106px; } .g-edit { width: 157px; } .g-sens { width: 74px; }
.g-add { width: 63px; } .g-analyze { width: 62px; } .g-acro { width: 195px; } .g-adobe { width: 77px; }
.lines { display: flex; flex-direction: column; gap: 7px; padding-top: 12px; }
.stack { display: flex; flex-direction: column; padding-top: 3px; }
.stack .row { height: 26px; }
.row { display: flex; align-items: center; height: 24px; }
.center { justify-content: center; }
.t { width: 26px; height: 24px; display: flex; align-items: center; justify-content: center; color: #d4d4d4; }
.t.on { border: 1px solid #999; border-radius: 4px; background: #383838; }
.c { width: 12px; height: 24px; display: flex; align-items: center; justify-content: center; }
.gap3 { margin-left: 3px; }
.sep { width: 1px; height: 24px; background: #555; margin-left: 4px; }
.nomargin { margin: 0 1px; }
.b { font-weight: 700; font-size: 14px; }
.i { font-style: italic; font-family: "Liberation Serif", serif; font-size: 16px; }
.u { text-decoration: underline; font-size: 14px; }
.sym { font-size: 18px; }
.tall { display: flex; flex-direction: column; align-items: center; padding-top: 7px; line-height: 16px; white-space: nowrap; font-size: 11px; }
.tall span { margin-top: 3px; }
.tall span svg { display: inline-block; vertical-align: 2px; }
.tall .under { margin-top: 5px; }
.off { color: #666; }
.w75 { width: 75px; } .w58 { width: 60px; } .w46 { width: 46px; } .w85 { width: 84px; } .w89 { width: 90px; } .w80 { width: 81px; } .w96 { width: 96px; }
.g-styles .body { padding-right: 2px; }
.paste { width: 54px; margin-left: 6px; }
.clipstack { margin-left: -5px; }
.cc { margin-left: 5px; }
.combo { display: grid; align-items: center; height: 24px; margin-left: 3px; }
.combo select { grid-area: 1 / 1; appearance: none; width: 100%; height: 24px; border: 1px solid #777; border-radius: 4px; background: #292929; color: #fff; font: inherit; padding: 0 2px; }
.combo svg { grid-area: 1 / 1; justify-self: end; margin-right: 2px; }
.w122 { width: 122px; margin-left: 1px; } .w42 { width: 42px; } .w146 { width: 146px; margin-left: 2px; }
.g-font .body, .g-align .body { padding-left: 7px; }
.g-align .lines { padding-top: 12px; }
.g-num .body { padding-left: 6px; }
.tallsep { height: 62px; margin: 11px 5px 0; }
.cm { margin-left: 4px; }
.g-cells .body { padding-left: 12px; }
.side { height: 26px; display: flex; align-items: center; gap: 4px; font-size: 11px; justify-content: flex-start; }
.side span { flex: 1; text-align: left; }
.side.w85 { width: 74px; } .side.w89 { width: 78px; } .side.w80 { width: 69px; }
.editcol { margin-left: 7px; width: 49px; }
.wide { width: 20px; }
.collapse { margin-left: auto; align-self: flex-end; padding: 0 8px 10px 0; }

/* formula bar */
.fbar { flex: none; display: flex; align-items: flex-start; height: 55px; padding: 8px 7px 0 8px; }
.namebox, .fx, .formula { display: flex; align-items: center; background: #292929; border: 1px solid #666; border-radius: 4px; height: 23px; }
.namebox { width: 102px; padding: 0 9px 0 6px; }
.namebox input, .formula input { flex: 1; min-width: 0; border: 0; background: none; color: #fff; font: inherit; padding: 0; }
.namebox input { font-size: 13px; }
.dots { margin: 6px 8px 0 9px; }
.fx { width: 86px; padding: 0 2px 0 5px; justify-content: space-between; }
.fn { font: italic 400 18px/20px "Liberation Serif", serif; color: #d4d4d4; }
.formula { flex: 1; height: 40px; margin-left: 4px; padding: 6px 3px 0 8px; align-items: flex-start; }

/* worksheet */
.sheet { flex: 1; min-height: 0; display: flex; }
.grid { flex: 1; min-width: 0; overflow: hidden; background: #fff; border-bottom: 1px solid #555; }
table { width: 100%; table-layout: fixed; border-collapse: separate; border-spacing: 0; font: 15px/18px "Liberation Sans", Arial, sans-serif; color: #000; }
.k0 { width: 29px; } .ka { width: 164px; } .kb { width: 721px; } .kc { width: 167px; } .k { width: 70px; } .kh { width: 72px; } .ki { width: 81px; }
th { background: #0a0a0a; color: #d9d9d9; font-weight: 400; padding: 0; }
thead th { height: 19px; line-height: 17px; border-right: 1px solid #666; border-bottom: 1px solid #aaa; }
thead .sel { background: #666; color: #fff; border-bottom: 2px solid #217346; }
.corner { vertical-align: bottom; border-bottom-color: #666; }
.corner svg { margin: 0 0 3px 14px; }
thead .m { text-align: right; padding-right: 1px; border-right: 0; }
tbody th { vertical-align: bottom; line-height: 16px; border-bottom: 1px solid #555; border-right: 1px solid #aaa; }
tbody .sel { background: #666; color: #fff; }
td { height: 19px; padding: 0; border-right: 1px solid #e0e0e0; border-bottom: 1px solid #e0e0e0; }
.r1h td { height: 21px; }
.gh { background: #4ea72e; border: 0; color: #fff; font-weight: 700; }
.gh div { display: flex; align-items: center; justify-content: space-between; padding: 0 1px 0 2px; }
.gh button { width: 17px; height: 17px; border: 1px solid #a8a8b4; background: linear-gradient(#fff, #e8eaf0); display: flex; align-items: center; justify-content: center; }
.h105 td { height: 105px; } .h86 td { height: 86px; } .h84 td { height: 84px; } .h157 td { height: 157px; } .h88 td { height: 88px; }
.data .a, .data .d, .data .demo { border-bottom-color: #4ea72e; }
.a { padding: 2px 0 0 2px; line-height: 20px; white-space: nowrap; }
.d { padding-left: 2px; line-height: 19px; white-space: nowrap; border-right: 0; }
.d p { margin: 0; font-weight: 700; display: flex; align-items: center; gap: 10px; padding-left: 1px; }
.demo { background: #daf2d0; border-right-color: #4ea72e; vertical-align: top; }
.demo.mid { vertical-align: middle; padding-left: 2px; white-space: nowrap; }
.demo button { width: 141px; height: 38px; background: #f0f0f0; color: #000; font: 15px/18px "Liberation Sans", Arial, sans-serif; border-style: solid; border-width: 1px 2px 2px 1px; border-color: #fff #777 #777 #fff; display: flex; align-items: center; justify-content: center; gap: 6px; }
.demo .big { height: 42px; }
.p32 { padding: 32px 0 0 2px; } .p8 { padding: 8px 0 0 2px; } .p12 { padding: 12px 0 0 4px; } .p17 { padding: 17px 0 0 6px; }
.dot { width: 15px; height: 15px; border-radius: 50%; border: 2px solid #6a6670; background: linear-gradient(#b4b0b8, #b8a4d0); }
.last { background: linear-gradient(#3f51b5, #3f51b5) right bottom / 4px 4px no-repeat #daf2d0; }
.note { background: #13501b; border: 0; color: #fff; vertical-align: top; text-align: center; font-size: 13px; line-height: 17px; padding: 0 4px; }
.note h2 { margin: 0 0 20px; font-size: 15px; line-height: 19px; }
.note p { margin: 0 0 17px; }
.active { outline: 2px solid #217346; outline-offset: -1px; position: relative; }
.active::after { content: ""; position: absolute; right: -3px; bottom: -3px; width: 6px; height: 6px; background: #217346; border: 1px solid #fff; border-width: 1px 0 0 1px; }
.vscroll { width: 19px; padding: 5px 0 3px; display: flex; flex-direction: column; align-items: center; gap: 4px; background: linear-gradient(#161616, #161616) center / 15px no-repeat; }
.vscroll i { flex: 1; width: 9px; border-radius: 5px; background: #999; margin-bottom: 4px; }

/* sheet tabs */
.sheets { flex: none; height: 32px; display: flex; align-items: flex-start; }
.arrow { width: 33px; height: 30px; display: flex; align-items: center; justify-content: center; }
.arrow:first-child { margin-left: 15px; }
.stab { color: #fff; text-decoration: none; font-size: 13px; line-height: 31px; height: 28px; }
.stab:not(.cur) { margin-left: 44px; width: 73px; background: linear-gradient(#666, #666) right 7px / 1px 18px no-repeat; }
.stab.cur { width: 88px; margin-left: 1px; color: #333; background: linear-gradient(#fff, #a9e8b5); border: 1px solid #fff; border-radius: 0 0 5px 5px; line-height: 24px; font-weight: 600; text-align: center; }
.stab span { display: inline-block; height: 24px; border-bottom: 2px solid #107c41; }
.add { width: 104px; height: 30px; display: flex; align-items: center; justify-content: center; background: linear-gradient(#666, #666) 3px 7px / 1px 18px no-repeat; }
.grip { margin: 12px 16px 0 auto; }
.hscroll { width: 676px; height: 18px; margin: 6px 17px 0 0; border-radius: 9px; background: #161616; display: flex; align-items: center; gap: 5px; padding: 0 4px; }
.hscroll i { flex: 1; height: 9px; border-radius: 5px; background: #999; margin-right: 12px; }

/* status bar */
.status { flex: none; height: 23px; border-top: 1px solid #444; background: #141414; display: flex; align-items: flex-start; font-size: 11px; line-height: 20px; }
.status > svg { margin-top: 4px; }
.ready { width: 51px; padding-left: 11px; margin-right: 11px; }
.status .acc { margin: 2px 5px 0 17px; }
.grow { flex: 1; }
.disp { margin: 0 12px 0 4px; width: 84px; white-space: nowrap; }
.vb { width: 40px; height: 22px; padding: 3px 0 0 13px; }
.vb.on { background: #262626; }
.status .zoom { margin: 4px 3px 0 40px; }
.pct { width: 46px; }
```
